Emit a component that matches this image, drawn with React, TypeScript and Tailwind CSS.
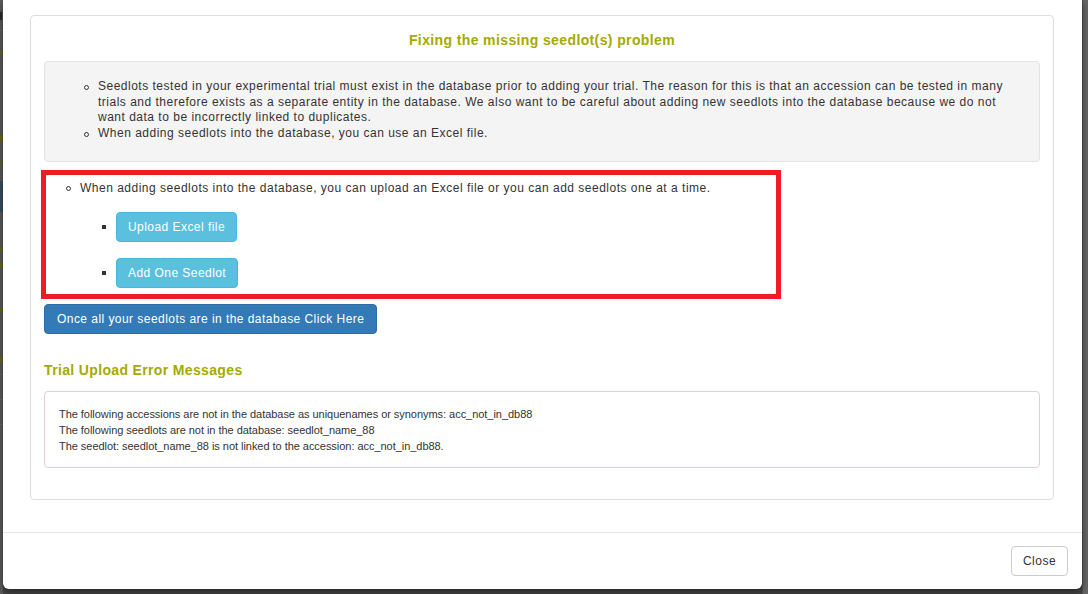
import React from "react";

const body = "font-['Liberation_Sans',Arial,sans-serif]";

function Circle() {
  return (
    <span className="h-[16px] flex items-center shrink-0">
      <span className="block w-[5px] h-[5px] rounded-full border border-[#333]" />
    </span>
  );
}

function LeftStrip() {
  return (
    <div className="w-[3px] h-[594px] bg-[#5d5d5d] flex flex-col shrink-0">
      <div className="h-[12px]" />
      <div className="h-[8px] w-[2px] bg-[#2a2a2a]" />
      <div className="h-[10px]" />
      <div className="h-px bg-[#6a6a6a]" />
      <div className="h-[20px]" />
      <div className="h-[4px] w-[2px] bg-[#6b6b2a]" />
      <div className="h-[80px]" />
      <div className="h-[6px] w-[3px] bg-[#6b6b18]" />
      <div className="h-[20px]" />
      <div className="h-[4px] w-[2px] bg-[#5f6a2a]" />
      <div className="h-[16px]" />
      <div className="h-[31px] bg-[#3b5163]" />
      <div className="h-[36px]" />
      <div className="h-[4px] w-[2px] bg-[#6b6b18]" />
      <div className="h-[10px]" />
      <div className="h-[6px] w-[2px] bg-[#6b6b18]" />
      <div className="h-[40px]" />
      <div className="h-[4px] w-[3px] bg-[#6b6b18]" />
      <div className="h-[46px]" />
      <div className="h-[4px] w-[3px] bg-[#6b6b18]" />
      <div className="h-[12px]" />
      <div className="h-px bg-[#6a6a6a]" />
      <div className="h-[24px]" />
      <div className="h-px bg-[#6a6a6a]" />
      <div className="h-[24px]" />
      <div className="h-px bg-[#6a6a6a]" />
      <div className="flex-1" />
    </div>
  );
}

export default function App() {
  return (
    <div className={`w-[1088px] h-[594px] overflow-hidden bg-[#474747] flex ${body} text-[#333]`}>
      <LeftStrip />
      <div className="w-[1079px] h-[589px] shrink-0 bg-white rounded-b-[6px] flex flex-col shadow-[0_3px_9px_rgba(0,0,0,0.5)] relative">
        <div className="flex-1 pt-[15px] pl-[27px] pr-[28px]">
          <div className="h-[485px] border border-[#ddd] rounded-[4px] px-[13px] pt-[14px]">
            <h4 className="h-[20px] leading-[20px] text-center font-bold text-[14px] tracking-[0.38px] text-[#a3aa00]">
              Fixing the missing seedlot(s) problem
            </h4>
            <div className="mt-[11px] h-[101px] bg-[#f4f4f4] border border-[#e3e3e3] rounded-[4px] pt-[17px] pr-[30px] text-[12px] leading-[15.7px] tracking-[0.5px]">
              <ul>
                <li className="flex gap-[9px] pl-[39px]">
                  <Circle />
                  <span>
                    Seedlots tested in your experimental trial must exist in the database prior to adding your trial. The reason for this is that an accession can be tested in many trials and therefore exists as a separate entity in the database. We also want to be careful about adding new seedlots into the database because we do not want data to be incorrectly linked to duplicates.
                  </span>
                </li>
                <li className="flex gap-[9px] pl-[39px]">
                  <Circle />
                  <span>When adding seedlots into the database, you can use an Excel file.</span>
                </li>
              </ul>
            </div>

            <div className="mt-[8px] ml-[-3px] w-[740px] h-[129px] border-[5px] border-[#ee1c25] pt-[5px] text-[12px] leading-[16px] tracking-[0.5px]">
              <div className="flex gap-[9px] pl-[20px]">
                <Circle />
                <span>When adding seedlots into the database, you can upload an Excel file or you can add seedlots one at a time.</span>
              </div>
              <div className="mt-[16px] pl-[56px] flex flex-col gap-[16px]">
                <div className="flex items-center gap-[10px]">
                  <span className="w-[4px] h-[4px] bg-[#333]" />
                  <button className="h-[30px] px-[11px] bg-[#5bc0de] border border-[#46b8da] rounded-[4px] text-white text-[12px] tracking-[0.45px]">
                    Upload Excel file
                  </button>
                </div>
                <div className="flex items-center gap-[10px]">
                  <span className="w-[4px] h-[4px] bg-[#333]" />
                  <button className="h-[30px] px-[11px] bg-[#5bc0de] border border-[#46b8da] rounded-[4px] text-white text-[12px] tracking-[0.45px]">
                    Add One Seedlot
                  </button>
                </div>
              </div>
            </div>

            <button className="mt-[5px] h-[30px] px-[12px] bg-[#337ab7] border border-[#2e6da4] rounded-[4px] text-white text-[12px] tracking-[0.45px]">
              Once all your seedlots are in the database Click Here
            </button>

            <h4 className="mt-[26px] h-[20px] leading-[20px] font-bold text-[14px] tracking-[0.35px] text-[#a3aa00]">
              Trial Upload Error Messages
            </h4>

            <div className="mt-[11px] h-[77px] border border-[#ebccd1] rounded-[4px] pt-[14px] pl-[14px] text-[11px] leading-[16px] tracking-[-0.04px]">
              <div>The following accessions are not in the database as uniquenames or synonyms: acc_not_in_db88</div>
              <div>The following seedlots are not in the database: seedlot_name_88</div>
              <div>The seedlot: seedlot_name_88 is not linked to the accession: acc_not_in_db88.</div>
            </div>
          </div>
        </div>
        <div className="h-[57px] border-t border-[#e5e5e5] flex items-center justify-end pr-[14px]">
          <button className="h-[30px] w-[57px] bg-white border border-[#ccc] rounded-[4px] text-[12px] tracking-[0.5px] text-[#333]">
            Close
          </button>
        </div>
      </div>
      <div className="w-[6px] h-[594px] shrink-0 bg-[#676767] border-l border-[#4f4f4f]" />
    </div>
  );
}
